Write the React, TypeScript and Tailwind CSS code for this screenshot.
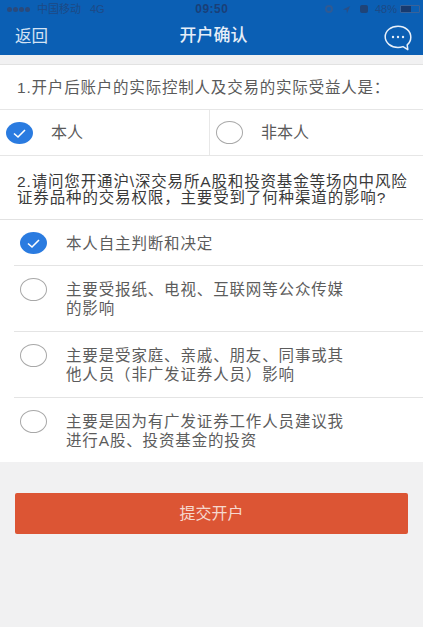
const FONT = { fontFamily: '"Liberation Sans", "Noto Sans CJK SC", sans-serif' };

function Radio({ checked }: { checked?: boolean }) {
  if (checked) {
    return (
      <svg viewBox="0 0 27 22" className="h-[22px] w-[27px] shrink-0">
        <ellipse cx="13.5" cy="11" rx="13.5" ry="11" fill="#2a7be0" />
        <path d="M8 11.5l4 3.5 7-7" fill="none" stroke="#fff" strokeWidth="1.6" />
      </svg>
    );
  }
  return (
    <span className="block h-[23px] w-[27px] shrink-0 rounded-[50%] border border-[#a8a8a8] bg-white" />
  );
}

function StatusBar() {
  return (
    <div className="flex h-[18px] items-center justify-between pl-[7px] pr-[3px] text-[11px] text-[#1d4a86]">
      <div className="flex items-center">
        <div className="flex gap-[1px]">
          {[0, 1, 2, 3].map((i) => (
            <span key={i} className="h-[5px] w-[5px] rounded-full bg-[#2a4a7c]" />
          ))}
        </div>
        <span className="ml-[7px]">中国移动</span>
        <span className="ml-[9px]">4G</span>
      </div>
      <span className="ml-[-6px] text-[12px] font-bold tracking-[0.5px] text-[#1a3f78]">09:50</span>
      <div className="flex items-center">
        <span className="h-[8px] w-[8px] rounded-full border-2 border-[#2f5a94]" />
        <svg viewBox="0 0 10 10" className="ml-[9px] h-[9px] w-[9px]">
          <path d="M9 1L1 5l4 .5L5.5 9.500z" fill="#2a4f86" />
        </svg>
        <span className="ml-[9px] h-[8px] w-[8px] rounded-[2px] bg-[#1f4478]" />
        <span className="ml-[7px]">48%</span>
        <div className="ml-[3px] flex h-[8px] w-[20px] rounded-[1px] border border-[#3a6298]">
          <span className="h-full w-[10px] bg-[#173a70]" />
        </div>
      </div>
    </div>
  );
}

function ChatIcon() {
  return (
    <svg viewBox="0 0 28 26" className="h-[26px] w-[28px]" fill="none">
      <path
        d="M14 1.200C6.900 1.200 1.200 5.900 1.200 11.800S6.900 22.400 14 22.400c1.800 0 3.500-.3 5-.8l4.800 3-.6-4.700c2.200-1.900 3.600-4.600 3.600-7.600C26.800 5.900 21.100 1.200 14 1.200z"
        stroke="#e8f0fa"
        strokeWidth="1.500"
        strokeLinejoin="round"
      />
      <circle cx="9" cy="12" r="1.200" fill="#e8f0fa" />
      <circle cx="14" cy="12" r="1.200" fill="#e8f0fa" />
      <circle cx="19" cy="12" r="1.200" fill="#e8f0fa" />
    </svg>
  );
}

function NavBar() {
  return (
    <div className="flex h-[37px] items-start pl-[15px] pr-[11px]">
      <span className="mt-[7px] flex-1 text-[16.5px] leading-[22px] text-[#d5e3f4]">返回</span>
      <span className="mt-[7px] text-[17px] font-medium leading-[22px] text-[#e6eef8]">开户确认</span>
      <div className="mt-[7px] flex flex-1 justify-end">
        <ChatIcon />
      </div>
    </div>
  );
}

const OPTIONS: { lines: string[]; checked?: boolean; height: string; last?: boolean }[] = [
  { lines: ["本人自主判断和决定"], checked: true, height: "h-[46px]" },
  { lines: ["主要受报纸、电视、互联网等公众传媒", "的影响"], height: "h-[66px]" },
  { lines: ["主要是受家庭、亲戚、朋友、同事或其", "他人员（非广发证券人员）影响"], height: "h-[66px]" },
  { lines: ["主要是因为有广发证券工作人员建议我", "进行A股、投资基金的投资"], height: "h-[64px]", last: true },
];

export default function App() {
  return (
    <div style={FONT} className="flex h-[627px] w-[423px] flex-col overflow-hidden bg-[#f1f1f2]">
      <header className="bg-[#0b5fb4]">
        <StatusBar />
        <NavBar />
      </header>

      <div className="h-[9px]" />

      <main className="border-t border-[#e2e2e2] bg-white">
        <p className="flex h-[44px] items-center pl-[17px] pt-[1px] text-[15.5px] tracking-[0.8px] text-[#5a5a5a]">
          1.开户后账户的实际控制人及交易的实际受益人是：
        </p>
        <div className="flex h-[47px] border-y border-[#e6e6e6]">
          <div className="flex w-[210px] items-center border-r border-[#e8e8e8] pl-[6px]">
            <Radio checked />
            <span className="ml-[18px] pt-[1px] text-[16px] text-[#5a5a5a]">本人</span>
          </div>
          <div className="flex flex-1 items-center pl-[6px]">
            <Radio />
            <span className="ml-[18px] pt-[1px] text-[16px] text-[#5a5a5a]">非本人</span>
          </div>
        </div>
        <p className="flex h-[63px] items-center pl-[17px] pt-[4px] text-[15.5px] leading-[16px] tracking-[0.85px] text-[#3a3a3a]">
          <span>
            2.请问您开通沪\深交易所A股和投资基金等场内中风险
            <br />
            证券品种的交易权限，主要受到了何种渠道的影响?
          </span>
        </p>
        <ul className="border-t border-[#e2e2e2] pl-[14px]">
          {OPTIONS.map((o) => (
            <li
              key={o.lines[0]}
              className={`flex ${o.height} items-start pl-[6px] ${o.last ? "" : "border-b border-[#e4e4e4]"}`}
            >
              <div className="mt-[12px]">
                <Radio checked={o.checked} />
              </div>
              <div className="ml-[19px] mt-[14px] text-[15.5px] leading-[19px] tracking-[0.85px] text-[#5c5c5c]">
                {o.lines.map((l) => (
                  <div key={l}>{l}</div>
                ))}
              </div>
            </li>
          ))}
        </ul>
      </main>

      <div className="px-[15px] pt-[31px]">
        <button
          type="button"
          className="h-[41px] w-[393px] rounded-[2px] bg-[#dc5534] text-[16px] text-[#f6d9cf]"
        >
          提交开户
        </button>
      </div>
    </div>
  );
}
